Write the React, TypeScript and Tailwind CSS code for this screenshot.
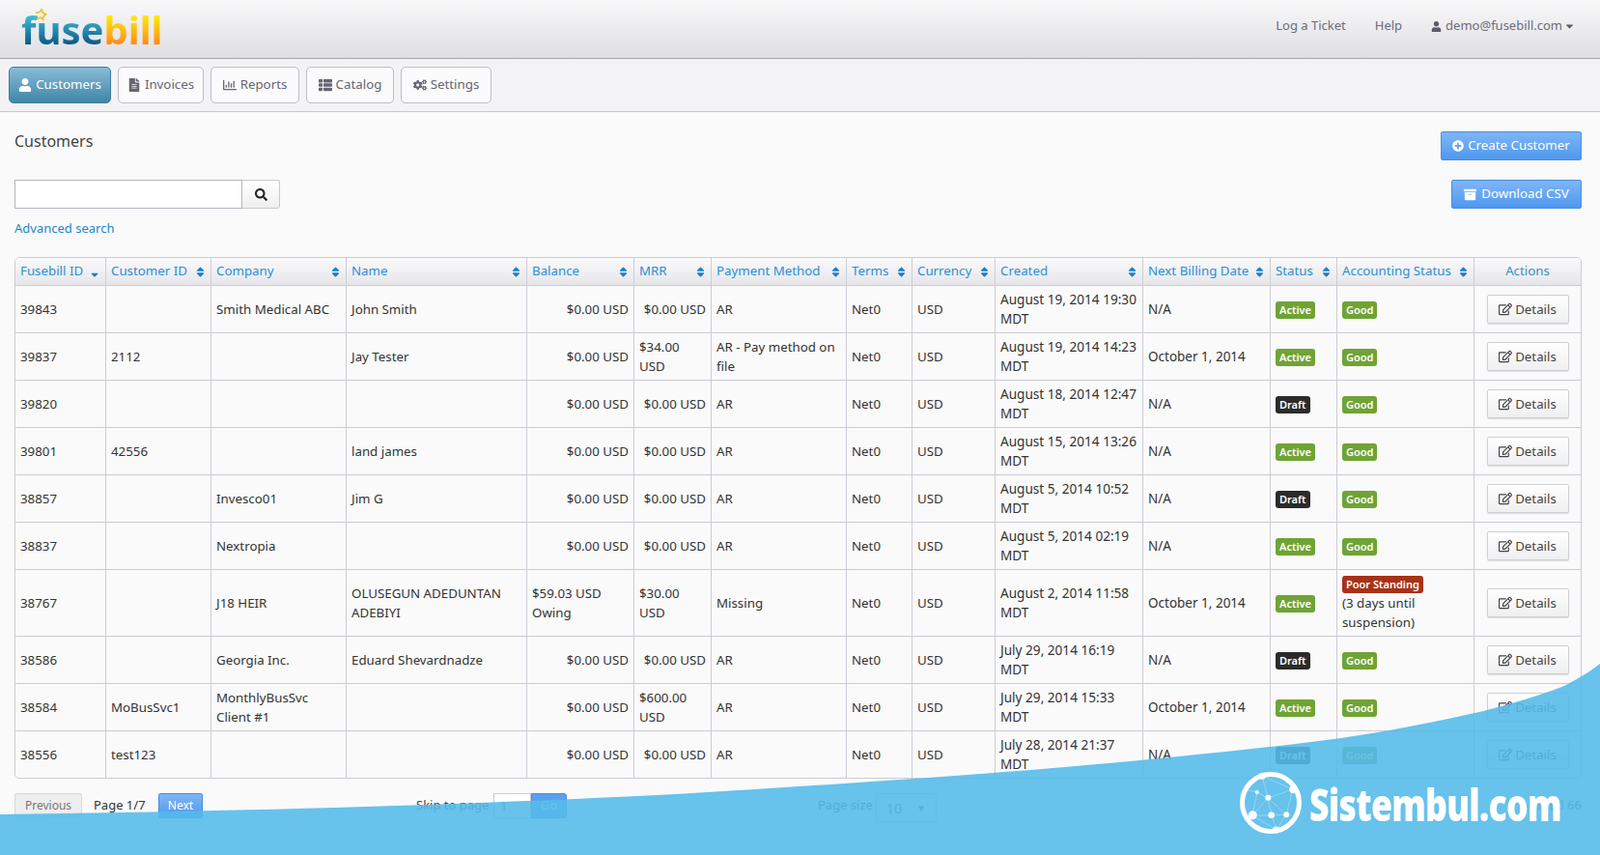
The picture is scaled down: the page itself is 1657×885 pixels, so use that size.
import { FaUser, FaFileAlt, FaRegChartBar, FaThList, FaCogs, FaSearch, FaPlusCircle, FaArchive, FaRegEdit, FaSort, FaSortDown, FaCaretDown } from "react-icons/fa";

type Row = {
  id: string;
  cust?: string;
  company?: string;
  name?: string;
  balance?: string;
  balanceLeft?: boolean;
  mrr?: string;
  mrrLeft?: boolean;
  method: string;
  created: string;
  next: string;
  status: "Active" | "Draft";
  poor?: boolean;
};

const rows: Row[] = [
  { id: "39843", company: "Smith Medical ABC", name: "John Smith", method: "AR", created: "August 19, 2014 19:30 MDT", next: "N/A", status: "Active" },
  { id: "39837", cust: "2112", name: "Jay Tester", mrr: "$34.00 USD", mrrLeft: true, method: "AR - Pay method on file", created: "August 19, 2014 14:23 MDT", next: "October 1, 2014", status: "Active" },
  { id: "39820", method: "AR", created: "August 18, 2014 12:47 MDT", next: "N/A", status: "Draft" },
  { id: "39801", cust: "42556", name: "land james", method: "AR", created: "August 15, 2014 13:26 MDT", next: "N/A", status: "Active" },
  { id: "38857", company: "Invesco01", name: "Jim G", method: "AR", created: "August 5, 2014 10:52 MDT", next: "N/A", status: "Draft" },
  { id: "38837", company: "Nextropia", method: "AR", created: "August 5, 2014 02:19 MDT", next: "N/A", status: "Active" },
  { id: "38767", company: "J18 HEIR", name: "OLUSEGUN ADEDUNTAN ADEBIYI", balance: "$59.03 USD Owing", balanceLeft: true, mrr: "$30.00 USD", mrrLeft: true, method: "Missing", created: "August 2, 2014 11:58 MDT", next: "October 1, 2014", status: "Active", poor: true },
  { id: "38586", company: "Georgia Inc.", name: "Eduard Shevardnadze", method: "AR", created: "July 29, 2014 16:19 MDT", next: "N/A", status: "Draft" },
  { id: "38584", cust: "MoBusSvc1", company: "MonthlyBusSvc Client #1", mrr: "$600.00 USD", mrrLeft: true, method: "AR", created: "July 29, 2014 15:33 MDT", next: "October 1, 2014", status: "Active" },
  { id: "38556", cust: "test123", method: "AR", created: "July 28, 2014 21:37 MDT", next: "N/A", status: "Draft" },
];

const navItems = [
  { label: "Customers", icon: FaUser, width: "w-[106px]", active: true },
  { label: "Invoices", icon: FaFileAlt, width: "w-[89px]" },
  { label: "Reports", icon: FaRegChartBar, width: "w-[92px]" },
  { label: "Catalog", icon: FaThList, width: "w-[91px]" },
  { label: "Settings", icon: FaCogs, width: "w-[94px]" },
];

const columns = [
  { label: "Fusebill ID", width: "w-[94px]" },
  { label: "Customer ID", width: "w-[109px]" },
  { label: "Company", width: "w-[140px]" },
  { label: "Name", width: "w-[187px]" },
  { label: "Balance", width: "w-[111px]" },
  { label: "MRR", width: "w-[80px]" },
  { label: "Payment Method", width: "w-[140px]" },
  { label: "Terms", width: "w-[68px]" },
  { label: "Currency", width: "w-[86px]" },
  { label: "Created", width: "w-[153px]" },
  { label: "Next Billing Date", width: "w-[132px]" },
  { label: "Status", width: "w-[69px]" },
  { label: "Accounting Status", width: "w-[142px]" },
];

const td = "border-r border-b border-[#ccccd6] px-[5px] pb-[1px] align-middle";

function Label({ text, color }: { text: string; color: string }) {
  return (
    <span className={`inline-block h-[18px] rounded-[3px] px-[4px] text-[11px] font-semibold leading-[18px] text-white ${color}`}>
      {text}
    </span>
  );
}

function Watermark() {
  return (
    <div className="pointer-events-none absolute inset-0">
      <svg className="absolute left-0 top-0" width="1657" height="885" viewBox="0 0 1657 885">
        <path
          d="M0 843 C200 840 420 836 700 822 C900 810 1060 799 1200 785 C1290 776 1370 768 1433 757 C1500 745 1560 733 1620 710 C1635 702 1647 695 1657 687 L1657 885 L0 885 Z"
          fill="#54bbea"
          fillOpacity="0.89"
        />
        <g fill="none" stroke="#fff" strokeWidth="0.7" opacity="0.45">
          <path d="M1307 803 L1313 826 L1297 844 L1317 844 L1332 843 L1339 817 L1307 803 M1313 826 L1317 844 L1322 859 L1332 843 M1313 826 L1339 817 M1302 820 L1297 844 M1290 817 L1302 820 L1313 826 M1297 844 L1322 859 M1313 826 L1332 843" />
        </g>
        <circle cx="1316" cy="831" r="29.5" fill="none" stroke="#fff" strokeWidth="5" />
        <g fill="#fff">
          <circle cx="1307.3" cy="803.3" r="3.5" />
          <circle cx="1339.3" cy="817.3" r="4" />
          <circle cx="1301.7" cy="820" r="2" />
          <circle cx="1313.3" cy="825.7" r="3" />
          <circle cx="1297.3" cy="843.7" r="4.5" />
          <circle cx="1316.7" cy="843.7" r="3.3" />
          <circle cx="1332.3" cy="843.3" r="3" />
          <circle cx="1321.7" cy="859" r="3.5" />
        </g>
      </svg>
      <div className="absolute left-[1356px] top-[806px] origin-left scale-x-[0.775] whitespace-nowrap font-['Roboto',sans-serif] text-[46px] font-black leading-[52px] tracking-[-1px] text-white">
        Sistembul.com
      </div>
    </div>
  );
}

export default function App() {
  return (
    <div className="relative h-[885px] w-[1657px] overflow-hidden bg-[#fafafa] font-['Open_Sans',sans-serif] text-[13.3px] text-[#333]">
      <header className="relative h-[61px] border-b border-[#a8a8b4] bg-gradient-to-b from-[#f8f8f9] to-[#dfdfe4]">
        <div className="absolute left-[20px] top-[6px] h-[44px] w-[150px]">
          <span className="absolute left-[2px] top-[-3px] whitespace-nowrap font-['Noto_Sans',sans-serif] text-[40px] font-bold leading-[56px]">
            <span className="bg-gradient-to-b from-[#3fbcd8] from-25% to-[#0f5a85] to-78% bg-clip-text text-transparent">fuse</span>
            <span className="bg-gradient-to-b from-[#ffe800] from-25% to-[#ff8a1a] to-78% bg-clip-text text-transparent">bill</span>
          </span>
          <svg className="absolute left-[15px] top-[2px]" width="15" height="15" viewBox="0 0 24 22" fill="none" stroke="#f5c32c" strokeWidth="3">
            <path d="M3 7 C8 8 11 6 13 1 C13 6 16 9 21 10 C17 11 15 13 15 18 C12 14 8 15 5 19" />
          </svg>
        </div>
        <div className="absolute right-[27px] top-[17px] flex h-[20px] items-center text-[13px] text-[#6c6c78]">
          <a className="mr-[30px]">Log a Ticket</a>
          <a className="mr-[30px]">Help</a>
          <FaUser className="mr-[4px] h-[11px] w-[11px] text-[#5c5c6a]" />
          <a>demo@fusebill.com</a>
          <FaCaretDown className="ml-[3px] h-[12px] w-[9px] text-[#5c5c6a]" />
        </div>
      </header>

      <nav className="flex h-[55px] gap-[7px] border-b border-[#c8c8ce] bg-[#f3f3f5] pl-[9px] pt-[8px]">
        {navItems.map((item) => {
          const Icon = item.icon;
          return (
            <a
              key={item.label}
              className={
                item.active
                  ? `flex h-[38px] items-center justify-center gap-[4px] rounded-[5px] border border-[#3a7c9c] bg-gradient-to-b from-[#88bbd7] to-[#3f86a8] text-white ${item.width}`
                  : `flex h-[38px] items-center justify-center gap-[4px] rounded-[5px] border border-[#bdbdc6] bg-[#fbfbfc] text-[#666672] ${item.width}`
              }
            >
              <Icon className="h-[14px] w-[14px]" />
              {item.label}
            </a>
          );
        })}
      </nav>

      <main className="relative h-[769px]">
        <h1 className="absolute left-[15px] top-[18px] text-[16px] font-normal leading-[24px] text-[#444]">Customers</h1>
        <button className="absolute left-[1492px] top-[20px] flex h-[30px] w-[146px] items-center justify-center gap-[4px] rounded-[2px] border border-[#4a8edc] bg-gradient-to-b from-[#7fb6f6] to-[#4e98ee] text-white">
          <FaPlusCircle className="h-[12px] w-[12px]" />
          Create Customer
        </button>

        <div className="absolute left-[15px] top-[70px] flex h-[30px] w-[275px]">
          <input className="h-full w-[236px] border border-[#b4b4bf] bg-white" />
          <button className="flex h-full flex-1 items-center justify-center rounded-r-[3px] border border-l-0 border-[#c8c8ce] bg-gradient-to-b from-white to-[#efeff0] text-[#222]">
            <FaSearch className="h-[13px] w-[13px]" />
          </button>
        </div>
        <button className="absolute left-[1503px] top-[70px] flex h-[30px] w-[135px] items-center justify-center gap-[5px] rounded-[2px] border border-[#4a8edc] bg-gradient-to-b from-[#7fb6f6] to-[#4e98ee] text-white">
          <FaArchive className="h-[13px] w-[13px]" />
          Download CSV
        </button>
        <a className="absolute left-[15px] top-[110px] text-[13px] leading-[20px] text-[#1a87c9]">Advanced search</a>

        <div className="absolute left-[15px] top-[150px] w-[1623px] overflow-hidden rounded-[5px] border border-[#ccccd6]">
          <table className="w-[1621px] table-fixed border-separate border-spacing-0">
            <thead>
              <tr className="h-[29px]">
                {columns.map((col, i) => (
                  <th
                    key={col.label}
                    className={`relative border-r border-b border-[#ccccd6] bg-gradient-to-b from-[#fafafb] to-[#e6e6ea] px-[5px] text-left font-normal text-[#2a8fd6] ${col.width}`}
                  >
                    {col.label}
                    {i === 0 ? (
                      <FaSortDown className="absolute right-[5px] top-[9px] h-[12px] w-[12px] text-[#1a7fc4]" />
                    ) : (
                      <FaSort className="absolute right-[4px] top-[8px] h-[13px] w-[13px] text-[#1a7fc4]" />
                    )}
                  </th>
                ))}
                <th className="w-[110px] border-b border-[#ccccd6] bg-gradient-to-b from-[#fafafb] to-[#e6e6ea] px-[5px] text-center font-normal text-[#3a8fc8]">
                  Actions
                </th>
              </tr>
            </thead>
            <tbody className="leading-[20px]">
              {rows.map((r, i) => {
                const last = i === rows.length - 1;
                const cell = last ? `${td} border-b-0` : td;
                return (
                  <tr key={r.id} className={r.poor ? "h-[69px]" : last ? "h-[48px]" : "h-[49px]"}>
                    <td className={cell}>{r.id}</td>
                    <td className={cell}>{r.cust}</td>
                    <td className={cell}>{r.company}</td>
                    <td className={cell}>{r.name}</td>
                    <td className={`${cell} ${r.balanceLeft ? "text-left" : "text-right"}`}>{r.balance ?? "$0.00 USD"}</td>
                    <td className={`${cell} ${r.mrrLeft ? "text-left" : "text-right"}`}>{r.mrr ?? "$0.00 USD"}</td>
                    <td className={cell}>{r.method}</td>
                    <td className={cell}>Net0</td>
                    <td className={cell}>USD</td>
                    <td className={`${cell} text-[13.6px]`}>{r.created}</td>
                    <td className={`${cell} text-[13.5px]`}>{r.next}</td>
                    <td className={cell}>
                      <Label text={r.status} color={r.status === "Active" ? "bg-[#6fa336]" : "bg-[#2b2b2b]"} />
                    </td>
                    <td className={cell}>
                      {r.poor ? (
                        <>
                          <Label text="Poor Standing" color="bg-[#a83216]" />
                          <div>(3 days until suspension)</div>
                        </>
                      ) : (
                        <Label text="Good" color="bg-[#6fa336]" />
                      )}
                    </td>
                    <td className={`${last ? "border-b-0" : "border-b"} border-[#ccccd6] text-center align-middle`}>
                      <button className="inline-flex h-[30px] w-[85px] items-center justify-center gap-[3px] rounded-[2px] border border-[#cfcfd4] bg-gradient-to-b from-white to-[#efeff1] text-[#444] shadow-[0_1px_1px_rgba(0,0,0,0.12)]">
                        <FaRegEdit className="h-[14px] w-[14px]" />
                        Details
                      </button>
                    </td>
                  </tr>
                );
              })}
            </tbody>
          </table>
        </div>

        <div className="absolute left-[15px] top-[705px] flex h-[26px] w-[1623px] items-center text-[13px]">
          <button className="h-[26px] w-[70px] rounded-[2px] border border-[#d8d8dc] bg-[#eeeeef] font-['Liberation_Sans',sans-serif] text-[12px] text-[#777]">Previous</button>
          <span className="ml-[12px] w-[67px] text-[#333]">Page 1/7</span>
          <button className="h-[26px] w-[46px] rounded-[2px] border border-[#4a8edc] bg-gradient-to-b from-[#7fb6f6] to-[#4e98ee] font-['Liberation_Sans',sans-serif] text-[12px] text-white">Next</button>
          <span className="ml-[221px] w-[80px] whitespace-nowrap text-[#444]">Skip to page</span>
          <input defaultValue="1" className="h-[26px] w-[39px] border border-[#ccc] bg-white px-[6px] text-[#555]" />
          <button className="h-[26px] w-[37px] rounded-r-[3px] border border-[#4a8edc] bg-[#5a9ff0] text-white">Go</button>
          <span className="ml-[260px] w-[60px] whitespace-nowrap text-[#444]">Page size</span>
          <div className="flex h-[30px] w-[63px] translate-y-[2px] items-center justify-between rounded-[3px] border border-[#ccc] px-[10px] text-[14px] text-[#555]">
            10
            <span className="text-[10px]">▼</span>
          </div>
          <span className="ml-auto text-[#555]">Total 66</span>
        </div>
      </main>

      <Watermark />
    </div>
  );
}
